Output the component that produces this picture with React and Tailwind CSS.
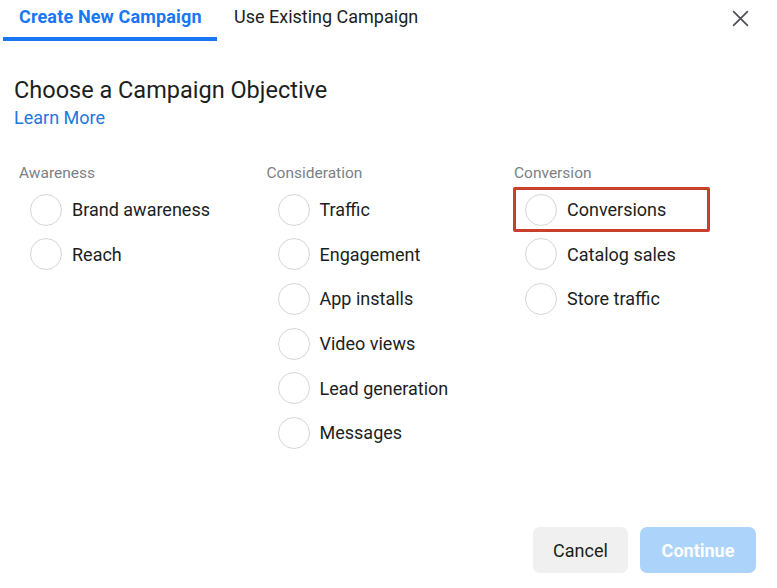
import { useState } from 'react'

const columns = [
  { title: 'Awareness', items: ['Brand awareness', 'Reach'] },
  {
    title: 'Consideration',
    items: ['Traffic', 'Engagement', 'App installs', 'Video views', 'Lead generation', 'Messages'],
  },
  { title: 'Conversion', items: ['Conversions', 'Catalog sales', 'Store traffic'] },
]

const App = () => {
  const [tab] = useState(0)

  return (
    <div className="w-[777px] h-[588px] bg-white font-['Roboto',sans-serif] text-[#1c1e21] flex flex-col overflow-hidden">

      {/* ── Tabs ── */}
      <div className="h-[42px] flex items-start relative">
        <div className="ml-[3px] w-[214px] h-[42px] flex flex-col">
          <div className="h-[33px] flex items-center pl-[16px] text-[18px] font-bold text-[#1877f2] tracking-[0.15px]">
            Create New Campaign
          </div>
          <div className={`mt-[4px] h-[4px] ${tab === 0 ? 'bg-[#1877f2]' : ''}`} />
        </div>
        <div className="h-[33px] flex items-center ml-[17px] text-[18px] text-[#1c1e21]">
          Use Existing Campaign
        </div>
        <button className="ml-auto mr-[28px] mt-[10px] w-[17px] h-[17px] text-[#4b4f56]">
          <svg viewBox="0 0 16 16" width="17" height="17" fill="none" stroke="currentColor" strokeWidth="1.6" strokeLinecap="round">
            <path d="M1.5 1.5 L14.5 14.5 M14.5 1.5 L1.5 14.5" />
          </svg>
        </button>
      </div>

      {/* ── Heading ── */}
      <div className="pl-[14px] pt-[33px]">
        <h2 className="text-[23.5px] leading-[30px] text-[#1c1e21]">Choose a Campaign Objective</h2>
        <a className="block text-[18px] leading-[22px] mt-[2px] text-[#2377e0] cursor-pointer">Learn More</a>
      </div>

      {/* ── Objectives ── */}
      <div className="flex pl-[19px] mt-[34px]">
        {columns.map((col) => (
          <div key={col.title} className="w-[247.5px] flex flex-col">
            <div className="text-[15.5px] leading-[20px] text-[#7d8085]">{col.title}</div>
            <div className="mt-[4.5px] flex flex-col">
              {col.items.map((item) => (
                <div key={item} className="relative h-[44.6px] flex items-center">
                  {item === 'Conversions' && (
                    <div className="absolute left-[-1px] top-[-0.5px] w-[197px] h-[45px] border-[3px] border-[#c8402a] rounded-[2px]" />
                  )}
                  <span className="ml-[11px] w-[32px] h-[32px] rounded-full border border-[#d3d6db] bg-white shrink-0" />
                  <span className="ml-[10px] text-[18px] text-[#1c1e21]">{item}</span>
                </div>
              ))}
            </div>
          </div>
        ))}
      </div>

      {/* ── Footer buttons ── */}
      <div className="mt-auto mb-[15px] flex justify-end gap-[12px] pr-[21px]">
        <button className="w-[95px] h-[46px] rounded-[7px] bg-[#f0f0f0] text-[18px] text-[#1c1e21]">
          Cancel
        </button>
        <button className="w-[116px] h-[46px] rounded-[7px] bg-[#acd3fa] text-[18px] font-bold text-white">
          Continue
        </button>
      </div>
    </div>
  )
}

export default App
